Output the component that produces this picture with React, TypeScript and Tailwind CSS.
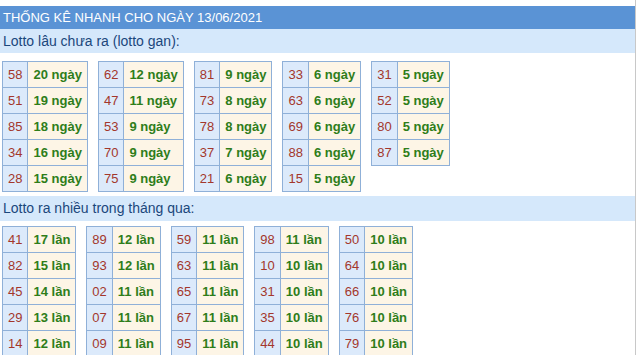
type Row = [string, string];

const gan: Row[][] = [
  [["58", "20"], ["51", "19"], ["85", "18"], ["34", "16"], ["28", "15"]],
  [["62", "12"], ["47", "11"], ["53", "9"], ["70", "9"], ["75", "9"]],
  [["81", "9"], ["73", "8"], ["78", "8"], ["37", "7"], ["21", "6"]],
  [["33", "6"], ["63", "6"], ["69", "6"], ["88", "6"], ["15", "5"]],
  [["31", "5"], ["52", "5"], ["80", "5"], ["87", "5"]],
];

const nhieu: Row[][] = [
  [["41", "17"], ["82", "15"], ["45", "14"], ["29", "13"], ["14", "12"]],
  [["89", "12"], ["93", "12"], ["02", "11"], ["07", "11"], ["09", "11"]],
  [["59", "11"], ["63", "11"], ["65", "11"], ["67", "11"], ["95", "11"]],
  [["98", "11"], ["10", "10"], ["31", "10"], ["35", "10"], ["44", "10"]],
  [["50", "10"], ["64", "10"], ["66", "10"], ["76", "10"], ["79", "10"]],
];

function LottoTable({ rows, unit }: { rows: Row[]; unit: string }) {
  return (
    <table className="border-collapse">
      <tbody>
        {rows.map(([num, count]) => (
          <tr key={num}>
            <td className="border border-[#8fb0d8] bg-[#dceafb] px-[5px] py-[5px] text-[13px] leading-[15px] text-[#a3372c]">
              {num}
            </td>
            <td className="border border-[#8fb0d8] bg-[#fdf5e6] px-[5px] py-[5px] text-[13px] leading-[15px] font-bold text-[#2e7d1a] whitespace-nowrap">
              {count} {unit}
            </td>
          </tr>
        ))}
      </tbody>
    </table>
  );
}

function SubHeader({ title, className }: { title: string; className?: string }) {
  return (
    <div className={"flex items-center bg-[#d5e8fb] pl-[3px] text-[14px] text-[#1b477c] " + (className ?? "")}>
      {title}
    </div>
  );
}

export default function App() {
  return (
    <div className="h-[355px] overflow-hidden bg-white font-['Liberation_Sans',Arial,sans-serif]">
      <div className="w-[636px] h-full border-r border-[#c8c8c8] pt-[6px]">
        <div className="flex h-[23px] items-center bg-[#5a93d5] pl-[3px] text-[13px] text-white">
          THỐNG KÊ NHANH CHO NGÀY 13/06/2021
        </div>
        <SubHeader title="Lotto lâu chưa ra (lotto gan):" className="h-[24px]" />
        <div className="mt-[8px] flex items-start gap-[10px] pl-[2px]">
          {gan.map((rows, i) => (
            <LottoTable key={i} rows={rows} unit="ngày" />
          ))}
        </div>
        <SubHeader title="Lotto ra nhiều trong tháng qua:" className="mt-[4px] h-[25px]" />
        <div className="mt-[5px] flex items-start gap-[10px] pl-[2px]">
          {nhieu.map((rows, i) => (
            <LottoTable key={i} rows={rows} unit="lần" />
          ))}
        </div>
      </div>
    </div>
  );
}
